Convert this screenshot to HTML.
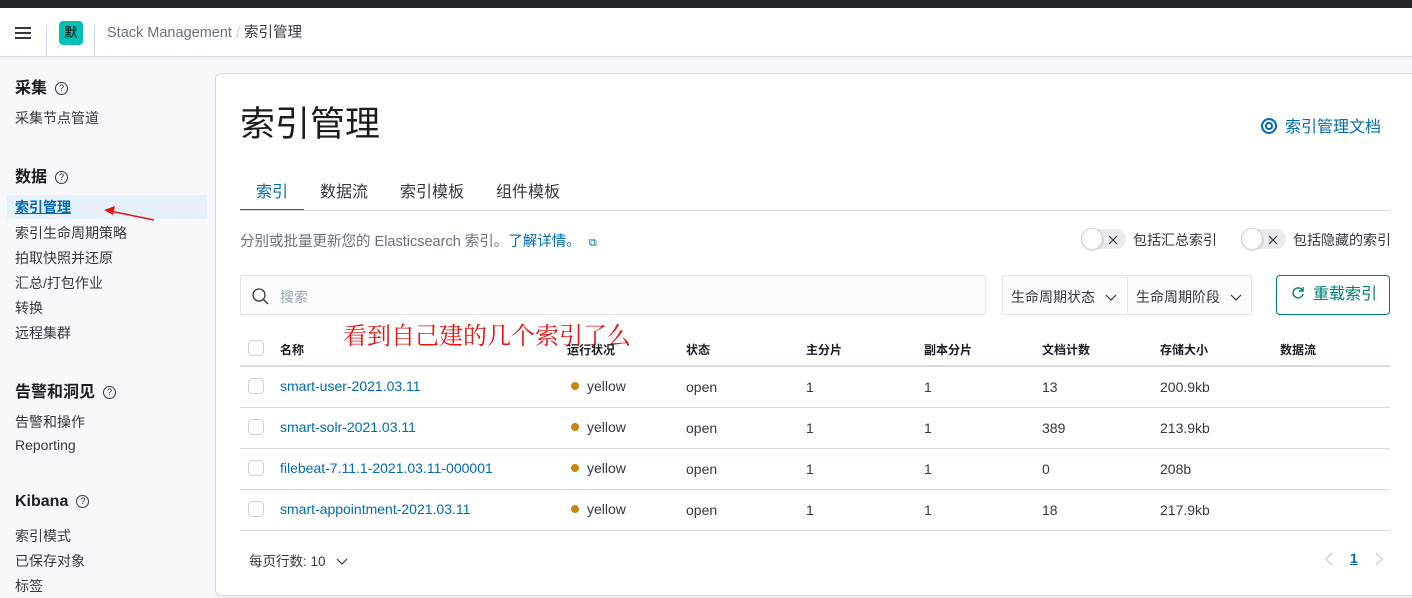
<!DOCTYPE html><html><head><meta charset="utf-8"><style>
*{box-sizing:border-box;margin:0;padding:0}
body{width:1412px;height:598px;overflow:hidden;background:#f7f8fc;font-family:"Liberation Sans","Noto Sans CJK SC",sans-serif;color:#343741;position:relative;font-size:14px}
.a{position:absolute;white-space:nowrap}
.q{display:inline-block;width:13px;height:13px;border:1.3px solid #343741;border-radius:50%;font-size:9px;line-height:10px;text-align:center;vertical-align:middle;margin-left:8px;font-weight:normal}
.cb{position:absolute;left:248px;width:16px;height:16px;border:1px solid #c9ced8;border-radius:4px;background:#fff}
.row{position:absolute;left:240px;width:1150px;height:1px;background:#d3dae6}
.c{position:absolute;font-size:14px;white-space:nowrap}
.h{font-size:12px;font-weight:bold;color:#1a1c21}
.dot{display:inline-block;width:8px;height:8px;border-radius:50%;background:#c5860b;margin-right:8px;vertical-align:1px}
.tg{position:absolute;width:44px;height:20px;border-radius:10px;background:#e9ebf0}
.tg i{position:absolute;left:-1px;top:-1px;width:22px;height:22px;border-radius:50%;background:#fff;border:1px solid #c9ced8;box-shadow:0 1px 2px rgba(0,0,0,.15)}
.tg svg{position:absolute;left:26px;top:6px}
.chev{display:inline-block;vertical-align:middle;margin-left:10px}
</style></head><body>
<div class="a" style="left:0;top:0;width:1412px;height:8px;background:#25282f"></div>
<div class="a" style="left:0;top:8px;width:1412px;height:49px;background:#fff;border-bottom:1px solid #d3dae6;box-shadow:0 1px 3px rgba(0,0,0,.08)"></div>
<div class="a" style="left:15px;top:27px;width:16px;height:2px;background:#343741;box-shadow:0 5px 0 #343741,0 10px 0 #343741"></div>
<div class="a" style="left:46px;top:25px;width:1px;height:32px;background:#d3dae6"></div>
<div class="a" style="left:94px;top:25px;width:1px;height:32px;background:#d3dae6"></div>
<div class="a" style="left:59px;top:21px;width:24px;height:24px;background:#00bfb3;border-radius:4px;font-size:13px;line-height:24px;text-align:center;color:#000">默</div>
<div class="a" style="left:107px;top:24px;font-size:14.5px;line-height:18px;color:#69707d">Stack Management <span style="color:#c9ced8">/</span> <span style="color:#343741">索引管理</span></div>

<div class="a" style="left:15px;top:74px;font-size:16px;font-weight:bold;color:#1a1c21">采集<span class="q">?</span></div>
<div class="a" style="left:15px;top:108px">采集节点管道</div>
<div class="a" style="left:15px;top:163px;font-size:16px;font-weight:bold;color:#1a1c21">数据<span class="q">?</span></div>
<div class="a" style="left:7px;top:195px;width:200px;height:24px;background:#e6f0f8"></div>
<div class="a" style="left:15px;top:197px;color:#006bb4;text-decoration:underline;font-weight:bold">索引管理</div>
<svg class="a" style="left:100px;top:202px" width="56" height="22"><line x1="54" y1="18" x2="10" y2="9" stroke="#e8120f" stroke-width="1.5"/><path d="M4 8 L15 4 L13 13 Z" fill="#e8120f"/></svg>
<div class="a" style="left:15px;top:223px">索引生命周期策略</div>
<div class="a" style="left:15px;top:248px">拍取快照并还原</div>
<div class="a" style="left:15px;top:273px">汇总/打包作业</div>
<div class="a" style="left:15px;top:298px">转换</div>
<div class="a" style="left:15px;top:323px">远程集群</div>
<div class="a" style="left:15px;top:378px;font-size:16px;font-weight:bold;color:#1a1c21">告警和洞见<span class="q">?</span></div>
<div class="a" style="left:15px;top:412px">告警和操作</div>
<div class="a" style="left:15px;top:437px">Reporting</div>
<div class="a" style="left:15px;top:493px;font-size:16px;font-weight:bold;color:#1a1c21">Kibana<span class="q">?</span></div>
<div class="a" style="left:15px;top:526px">索引模式</div>
<div class="a" style="left:15px;top:551px">已保存对象</div>
<div class="a" style="left:15px;top:576px">标签</div>

<div class="a" style="left:215px;top:73px;width:1210px;height:523px;background:#fff;border:1px solid #d3dae6;border-radius:6px;box-shadow:0 2px 3px rgba(0,0,0,.06)"></div>
<div class="a" style="left:240px;top:100px;font-size:35px;line-height:50px;color:#1a1c21">索引管理</div>
<div class="a" style="left:1261px;top:113px;font-size:16px;color:#006bb4"><span style="display:inline-block;width:16px;height:16px;border:2px solid #006bb4;border-radius:50%;vertical-align:-2px;margin-right:8px;box-shadow:inset 0 0 0 2px #fff,inset 0 0 0 4px #006bb4"></span>索引管理文档</div>
<div class="a" style="left:256px;top:178px;font-size:16px;color:#006bb4">索引</div>
<div class="a" style="left:320px;top:178px;font-size:16px">数据流</div>
<div class="a" style="left:400px;top:178px;font-size:16px">索引模板</div>
<div class="a" style="left:496px;top:178px;font-size:16px">组件模板</div>
<div class="a" style="left:240px;top:209px;width:64px;height:2px;background:#006bb4"></div>
<div class="a" style="left:240px;top:210px;width:1150px;height:1px;background:#d3dae6"></div>
<div class="a" style="left:240px;top:230px;font-size:14.5px;color:#69707d">分别或批量更新您的 Elasticsearch 索引。<span style="color:#006bb4">了解详情。</span> <span style="color:#006bb4;font-size:11px;margin-left:4px">⧉</span></div>
<div class="tg" style="left:1082px;top:229px"><i></i><svg width="10" height="10"><path d="M1 1L9 9M9 1L1 9" stroke="#343741" stroke-width="1.2"/></svg></div>
<div class="a" style="left:1133px;top:230px">包括汇总索引</div>
<div class="tg" style="left:1242px;top:229px"><i></i><svg width="10" height="10"><path d="M1 1L9 9M9 1L1 9" stroke="#343741" stroke-width="1.2"/></svg></div>
<div class="a" style="left:1293px;top:230px">包括隐藏的索引</div>

<div class="a" style="left:240px;top:275px;width:746px;height:40px;background:#fbfcfd;border:1px solid #e3e6ec;border-radius:2px"></div>
<svg class="a" style="left:251px;top:287px" width="18" height="18"><circle cx="8" cy="8" r="6" fill="none" stroke="#343741" stroke-width="1.3"/><line x1="12.5" y1="12.5" x2="17" y2="17" stroke="#343741" stroke-width="1.3"/></svg>
<div class="a" style="left:280px;top:287px;font-size:14px;color:#98a2b3">搜索</div>
<div class="a" style="left:1002px;top:275px;width:250px;height:40px;background:#fbfcfd;border:1px solid #e3e6ec"></div>
<div class="a" style="left:1127px;top:276px;width:1px;height:38px;background:#e3e6ec"></div>
<div class="a" style="left:1011px;top:287px">生命周期状态<svg class="chev" width="12" height="8"><path d="M1 1L6 6L11 1" fill="none" stroke="#343741" stroke-width="1.2"/></svg></div>
<div class="a" style="left:1136px;top:287px">生命周期阶段<svg class="chev" width="12" height="8"><path d="M1 1L6 6L11 1" fill="none" stroke="#343741" stroke-width="1.2"/></svg></div>
<div class="a" style="left:1276px;top:275px;width:114px;height:40px;border:1px solid #017d73;border-radius:4px;color:#017d73;font-size:16px;line-height:38px;padding-left:14px"><svg width="14" height="14" style="vertical-align:-1px"><path d="M11.5 4.5A5 5 0 1 0 12 8" fill="none" stroke="#017d73" stroke-width="1.4"/><path d="M12 1V5H8" fill="none" stroke="#017d73" stroke-width="1.4"/></svg><span style="margin-left:8px">重载索引</span></div>

<div class="a" style="left:343px;top:316px;font-size:24px;color:#e8120f;font-family:'Noto Serif CJK SC',serif">看到自己建的几个索引了么</div>

<div class="cb" style="top:340px"></div>
<div class="c h" style="left:280px;top:341px">名称</div>
<div class="c h" style="left:567px;top:341px">运行状况</div>
<div class="c h" style="left:686px;top:341px">状态</div>
<div class="c h" style="left:806px;top:341px">主分片</div>
<div class="c h" style="left:924px;top:341px">副本分片</div>
<div class="c h" style="left:1042px;top:341px">文档计数</div>
<div class="c h" style="left:1160px;top:341px">存储大小</div>
<div class="c h" style="left:1280px;top:341px">数据流</div>
<div class="row" style="top:365px;height:2px"></div>

<div class="cb" style="top:378px"></div><div class="c" style="left:280px;top:378px;color:#006bb4">smart-user-2021.03.11</div><div class="c" style="left:571px;top:378px"><span class="dot"></span>yellow</div><div class="c" style="left:686px;top:379px">open</div><div class="c" style="left:806px;top:379px">1</div><div class="c" style="left:924px;top:379px">1</div><div class="c" style="left:1042px;top:379px">13</div><div class="c" style="left:1160px;top:379px">200.9kb</div>
<div class="row" style="top:407px"></div>
<div class="cb" style="top:419px"></div><div class="c" style="left:280px;top:419px;color:#006bb4">smart-solr-2021.03.11</div><div class="c" style="left:571px;top:419px"><span class="dot"></span>yellow</div><div class="c" style="left:686px;top:420px">open</div><div class="c" style="left:806px;top:420px">1</div><div class="c" style="left:924px;top:420px">1</div><div class="c" style="left:1042px;top:420px">389</div><div class="c" style="left:1160px;top:420px">213.9kb</div>
<div class="row" style="top:448px"></div>
<div class="cb" style="top:460px"></div><div class="c" style="left:280px;top:460px;color:#006bb4">filebeat-7.11.1-2021.03.11-000001</div><div class="c" style="left:571px;top:460px"><span class="dot"></span>yellow</div><div class="c" style="left:686px;top:461px">open</div><div class="c" style="left:806px;top:461px">1</div><div class="c" style="left:924px;top:461px">1</div><div class="c" style="left:1042px;top:461px">0</div><div class="c" style="left:1160px;top:461px">208b</div>
<div class="row" style="top:489px"></div>
<div class="cb" style="top:501px"></div><div class="c" style="left:280px;top:501px;color:#006bb4">smart-appointment-2021.03.11</div><div class="c" style="left:571px;top:501px"><span class="dot"></span>yellow</div><div class="c" style="left:686px;top:502px">open</div><div class="c" style="left:806px;top:502px">1</div><div class="c" style="left:924px;top:502px">1</div><div class="c" style="left:1042px;top:502px">18</div><div class="c" style="left:1160px;top:502px">217.9kb</div>
<div class="row" style="top:530px"></div>

<div class="a" style="left:249px;top:550px;font-size:13.5px">每页行数: 10<svg class="chev" width="12" height="8"><path d="M1 1L6 6L11 1" fill="none" stroke="#343741" stroke-width="1.2"/></svg></div>
<svg class="a" style="left:1325px;top:552px" width="8" height="14"><path d="M7 1L1 7L7 13" fill="none" stroke="#c2c5cc" stroke-width="1.2"/></svg>
<div class="a" style="left:1350px;top:550px;font-size:14px;color:#006bb4;font-weight:bold;text-decoration:underline">1</div>
<svg class="a" style="left:1375px;top:552px" width="8" height="14"><path d="M1 1L7 7L1 13" fill="none" stroke="#c2c5cc" stroke-width="1.2"/></svg>
</body></html>
